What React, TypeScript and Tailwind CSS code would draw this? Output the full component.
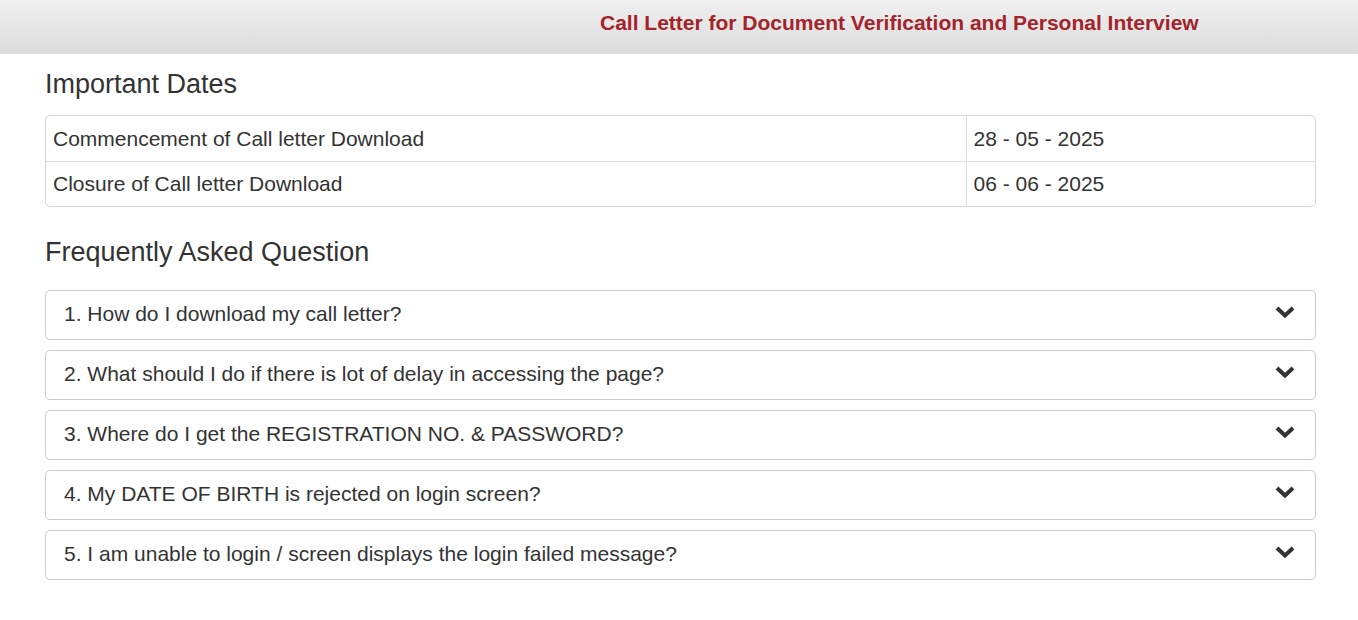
const dates = [
  { label: "Commencement of Call letter Download", value: "28 - 05 - 2025" },
  { label: "Closure of Call letter Download", value: "06 - 06 - 2025" },
]

const faqs = [
  "1. How do I download my call letter?",
  "2. What should I do if there is lot of delay in accessing the page?",
  "3. Where do I get the REGISTRATION NO. & PASSWORD?",
  "4. My DATE OF BIRTH is rejected on login screen?",
  "5. I am unable to login / screen displays the login failed message?",
]

export default function App() {
  return (
    <div className="min-h-screen bg-white text-[#333] font-['Liberation_Sans',Arial,sans-serif]">
      {/* Header */}
      <div className="h-[54px] bg-gradient-to-b from-[#f0f0f0] to-[#dcdcdc] flex items-center">
        <h1 className="pl-[600px] text-[21px] font-bold text-[#a3232a] leading-none -mt-[10px]">
          Call Letter for Document Verification and Personal Interview
        </h1>
      </div>

      <div className="w-[1271px] ml-[45px]">
        {/* Important Dates */}
        <h2 className="text-[27px] leading-[30px] mt-[15px] mb-[16px]">Important Dates</h2>
        <div className="border border-[#d6d6d6] rounded-[5px] overflow-hidden">
          <table className="w-full border-collapse text-[21px]">
            <tbody>
              {dates.map((d, i) => (
                <tr key={d.label} className={i > 0 ? "border-t border-[#ddd]" : ""}>
                  <td className="h-[45px] px-[7px] align-middle border-r border-[#ddd] w-[920px]">{d.label}</td>
                  <td className="h-[45px] px-[7px] align-middle">{d.value}</td>
                </tr>
              ))}
            </tbody>
          </table>
        </div>

        {/* FAQ */}
        <h2 className="text-[27px] leading-[30px] mt-[30px] mb-[23px]">Frequently Asked Question</h2>
        <div className="flex flex-col gap-[10px]">
          {faqs.map((q) => (
            <div
              key={q}
              className="h-[50px] border border-[#ccc] rounded-[5px] flex items-center justify-between pl-[18px] pr-[20px]"
            >
              <span className="text-[21px] leading-none -mt-[3px]">{q}</span>
              <svg width="20" height="14" viewBox="0 0 20 14" className="-mt-[7px]">
                <path d="M2 3 L10 10.5 L18 3" fill="none" stroke="#333" strokeWidth="4" strokeLinecap="butt" />
              </svg>
            </div>
          ))}
        </div>
      </div>
    </div>
  )
}
